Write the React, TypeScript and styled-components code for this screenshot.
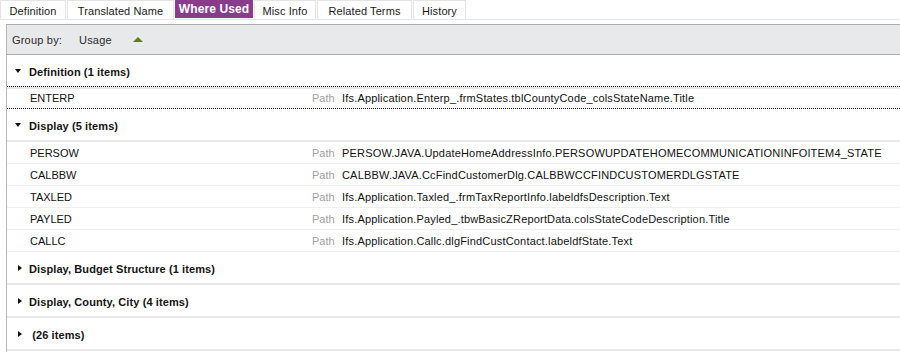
import styled, { createGlobalStyle, css } from "styled-components";

const GlobalStyle = createGlobalStyle`
  html, body {
    margin: 0;
    padding: 0;
    background: #ffffff;
  }
  body {
    font-family: "Liberation Sans", Arial, sans-serif;
    font-size: 11px;
    color: #000;
    overflow: hidden;
  }
`;

const Page = styled.div`
  width: 900px;
  height: 352px;
  display: flex;
  flex-direction: column;
  overflow: hidden;
`;

const TabBar = styled.div`
  display: flex;
  height: 19px;
  border-bottom: 1px solid #e6e6e6;
`;

const Tab = styled.div<{ $active?: boolean; $width: number }>`
  width: ${(p) => p.$width}px;
  box-sizing: border-box;
  height: 19px;
  display: flex;
  align-items: center;
  justify-content: center;
  border: 1px solid #e4e4e4;
  border-bottom: none;
  margin-right: 1px;
  color: #1a1a1a;
  padding-top: 2px;
  letter-spacing: 0.1px;
  ${(p) =>
    p.$active &&
    css`
      background: #8a3c8c;
      border-color: #8a3c8c;
      color: #fff;
      font-weight: bold;
      font-size: 12px;
      height: 18px;
      padding-top: 0;
      padding-bottom: 1px;
    `}
`;

const Panel = styled.div`
  margin-top: 4px;
  margin-left: 6px;
  border-left: 1px solid #b7b7b7;
  flex: 1;
  display: flex;
  flex-direction: column;
`;

const GroupByBar = styled.div`
  height: 29px;
  background: #e8e9eb;
  border-top: 1px solid #acacac;
  border-bottom: 1px solid #acacac;
  display: flex;
  align-items: center;
  padding-left: 5px;
  color: #2a2a2a;
  letter-spacing: 0.2px;
`;

const GroupByLabel = styled.span`
  width: 67px;
`;

const GroupByField = styled.span`
  width: 54px;
`;

const SortUp = styled.span`
  width: 0;
  height: 0;
  border-left: 5px solid transparent;
  border-right: 5px solid transparent;
  border-bottom: 5px solid #5d7d1e;
  margin-top: -1px;
`;

// 31px tall band + 2px separator, text sits a little low like the original grid
const GroupHeader = styled.div`
  height: 28px;
  padding-top: 3px;
  padding-left: 3px;
  border-bottom: 2px solid #e8e8e8;
  display: flex;
  align-items: center;
  font-weight: bold;
  color: #141414;
  letter-spacing: 0.1px;
`;

const Caret = styled.span<{ $open?: boolean }>`
  width: 16px;
  display: flex;
  justify-content: center;
  margin-right: 3px;
  margin-top: -2px;
  &::before {
    content: "";
    width: 0;
    height: 0;
    ${(p) =>
      p.$open
        ? css`
            border-left: 3.5px solid transparent;
            border-right: 3.5px solid transparent;
            border-top: 4px solid #111;
          `
        : css`
            border-top: 3.5px solid transparent;
            border-bottom: 3.5px solid transparent;
            border-left: 4px solid #111;
            margin-left: 3px;
          `}
  }
`;

const GroupTitle = styled.span`
  white-space: pre;
`;

const Row = styled.div<{ $selected?: boolean }>`
  height: 21px;
  display: grid;
  grid-template-columns: 282px 30px 1fr;
  align-items: center;
  padding-left: 23px;
  border-bottom: 1px solid #efefef;
  white-space: nowrap;
  ${(p) =>
    p.$selected &&
    css`
      height: 20px;
      margin-top: -2px;
      border-top: 1px dotted #000;
      border-bottom: 1px dotted #000;
      box-shadow: inset 0 2px 0 #e8e8e8;
      padding-top: 1px;
    `}
`;

const ItemName = styled.span`
  color: #111;
`;

const PathLabel = styled.span`
  color: #a0a0a0;
`;

const PathValue = styled.span`
  color: #111;
  letter-spacing: 0.18px;
`;

type Item = { name: string; path: string; selected?: boolean };
type Group = { title: string; open: boolean; items: Item[] };

const groups: Group[] = [
  {
    title: "Definition (1 items)",
    open: true,
    items: [
      {
        name: "ENTERP",
        path: "Ifs.Application.Enterp_.frmStates.tblCountyCode_colsStateName.Title",
        selected: true
      }
    ]
  },
  {
    title: "Display (5 items)",
    open: true,
    items: [
      {
        name: "PERSOW",
        path: "PERSOW.JAVA.UpdateHomeAddressInfo.PERSOWUPDATEHOMECOMMUNICATIONINFOITEM4_STATE"
      },
      {
        name: "CALBBW",
        path: "CALBBW.JAVA.CcFindCustomerDlg.CALBBWCCFINDCUSTOMERDLGSTATE"
      },
      {
        name: "TAXLED",
        path: "Ifs.Application.Taxled_.frmTaxReportInfo.labeldfsDescription.Text"
      },
      {
        name: "PAYLED",
        path: "Ifs.Application.Payled_.tbwBasicZReportData.colsStateCodeDescription.Title"
      },
      {
        name: "CALLC",
        path: "Ifs.Application.Callc.dlgFindCustContact.labeldfState.Text"
      }
    ]
  },
  { title: "Display, Budget Structure (1 items)", open: false, items: [] },
  { title: "Display, County, City (4 items)", open: false, items: [] },
  { title: " (26 items)", open: false, items: [] }
];

const tabs = [
  { label: "Definition", width: 66 },
  { label: "Translated Name", width: 107 },
  { label: "Where Used", width: 78, active: true },
  { label: "Misc Info", width: 62 },
  { label: "Related Terms", width: 95 },
  { label: "History", width: 53 }
];

export default function App() {
  return (
    <Page>
      <GlobalStyle />
      <TabBar>
        {tabs.map((t) => (
          <Tab key={t.label} $width={t.width} $active={t.active}>
            {t.label}
          </Tab>
        ))}
      </TabBar>
      <Panel>
        <GroupByBar>
          <GroupByLabel>Group by:</GroupByLabel>
          <GroupByField>Usage</GroupByField>
          <SortUp />
        </GroupByBar>
        {groups.map((g) => (
          <div key={g.title}>
            <GroupHeader>
              <Caret $open={g.open} />
              <GroupTitle>{g.title}</GroupTitle>
            </GroupHeader>
            {g.open &&
              g.items.map((it) => (
                <Row key={it.name} $selected={it.selected}>
                  <ItemName>{it.name}</ItemName>
                  <PathLabel>Path</PathLabel>
                  <PathValue>{it.path}</PathValue>
                </Row>
              ))}
          </div>
        ))}
      </Panel>
    </Page>
  );
}
